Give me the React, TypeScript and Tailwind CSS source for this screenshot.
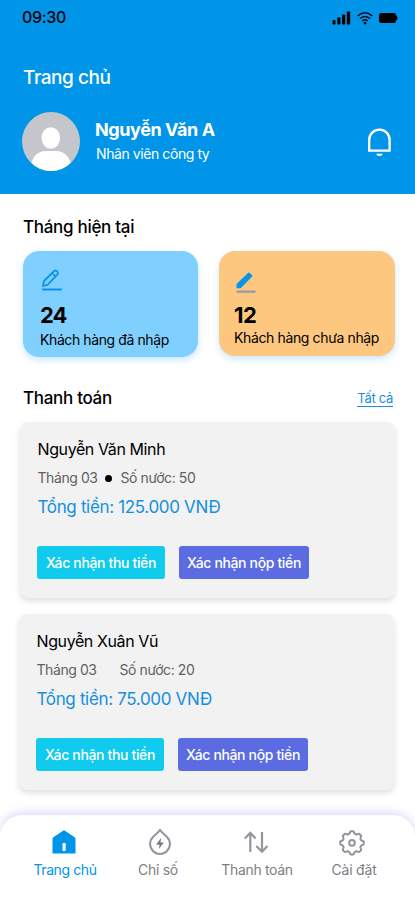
import React from "react";

function StatusBar() {
  return (
    <div className="flex h-[35px] items-center justify-between pl-[22px] pr-[17px] text-black">
      <span className="text-base font-medium leading-[35px] tracking-[-0.3px]">09:30</span>
      <div className="flex items-center gap-[6px]">
        <svg width="19" height="14" viewBox="0 0 19 14" fill="currentColor">
          <rect x="0.5" y="9" width="3" height="4.5" rx="0.8" />
          <rect x="5.3" y="6.5" width="3.2" height="7" rx="0.8" />
          <rect x="10" y="3.5" width="3.2" height="10" rx="0.8" />
          <rect x="14.8" y="0.5" width="3.4" height="13" rx="0.8" />
        </svg>
        <svg width="16" height="14" viewBox="0 0 16 14" fill="none" stroke="currentColor" strokeWidth="1.3">
          <path d="M0.7 5C4.8 .8 11.2 .8 15.3 5" />
          <path d="M3 7.6c2.8-2.7 7.2-2.7 10 0" />
          <path d="M5.3 10c1.6-1.5 3.8-1.5 5.4 0" />
          <circle cx="8" cy="12.1" r="1.4" fill="currentColor" stroke="none" />
        </svg>
        <svg width="19" height="12" viewBox="0 0 19 12" fill="currentColor">
          <rect x="0" y="1" width="17" height="10" rx="2.2" />
          <path d="M17 3.5c2 .6 2 4.4 0 5z" />
        </svg>
      </div>
    </div>
  );
}

function Header() {
  return (
    <header className="h-[194px] bg-[#0095e9] text-white">
      <StatusBar />
      <h1 className="mt-[31px] pl-[23px] text-[19px] font-medium leading-6 tracking-[-0.45px]">Trang chủ</h1>
      <div className="mt-[22px] flex items-center pl-[22px] pr-[23px]">
        <svg width="58" height="59" viewBox="0 0 58 59">
          <defs>
            <clipPath id="avatar">
              <ellipse cx="29" cy="29.5" rx="29" ry="29.5" />
            </clipPath>
          </defs>
          <g clipPath="url(#avatar)">
            <rect width="58" height="59" fill="#c5c6cc" />
            <ellipse cx="28.8" cy="26" rx="9.3" ry="10.8" fill="#fff" />
            <path d="M8 59C9 45 15 39 24 39h10c9 0 15 6 16 20z" fill="#fff" />
          </g>
        </svg>
        <div className="ml-[15px] flex-1">
          <div className="-mt-[2px] text-lg font-bold leading-6 tracking-[-0.42px]">Nguyễn Văn A</div>
          <div className="ml-px mt-[2px] text-sm leading-5 tracking-[-0.42px]">Nhân viên công ty</div>
        </div>
        <svg width="25" height="30" viewBox="0 0 25 30" fill="none" stroke="#fff" strokeWidth="2.3">
          <path d="M2.2 23.7V12.9a10.2 10.2 0 0 1 20.4 0v10.8z" />
          <path d="M9.3 26.8h6.4c-.6 3-5.8 3-6.4 0z" fill="#fff" stroke="none" />
        </svg>
      </div>
    </header>
  );
}

function SummaryCards() {
  return (
    <div className="mt-3 flex items-start justify-between pl-[23px] pr-5">
      <div className="h-[106px] w-[175px] rounded-2xl bg-[#80d0ff] pl-[17px] pt-[18px] shadow-[0_3px_7px_rgba(0,149,233,0.22)]">
        <svg width="22" height="22" viewBox="0 0 22 22" fill="none" stroke="#0a94e8" strokeWidth="1.8" strokeLinejoin="round">
          <path d="M3 17l1-5L14.2 2q1.3-1 2.6.2l.7.7q1 1.2 0 2.4L7.5 15.8z" />
          <path d="M13 4.8l2.8 2.8M2 20.5h20" />
        </svg>
        <div className="mt-[12px] text-[22px] font-bold leading-6 tracking-[-0.9px]">24</div>
        <div className="mt-[3px] whitespace-nowrap text-sm leading-5 tracking-[-0.4px]">Khách hàng đã nhập</div>
      </div>
      <div className="h-[105px] w-[176px] rounded-2xl bg-[#fdc77f] pl-[15px] pt-[20px] shadow-[0_3px_7px_rgba(0,149,233,0.22)]">
        <svg width="22" height="22" viewBox="0 0 22 22">
          <path d="M2.5 17.3v-4.2L14 2q.9-.8 1.8 0l2.2 2q.9.9 0 1.8L6.7 17.3z" fill="#0795eb" />
          <path d="M2.5 20.7h19" stroke="#999fa7" strokeWidth="2.4" />
        </svg>
        <div className="mt-[10px] text-[22px] font-bold leading-6 tracking-[-0.5px]">12</div>
        <div className="mt-px whitespace-nowrap text-sm leading-5 tracking-[-0.37px]">Khách hàng chưa nhập</div>
      </div>
    </div>
  );
}

type Payment = { name: string; water: string; total: string; dot: boolean };

function PaymentCard({ name, water, total, dot }: Payment) {
  return (
    <article className="h-[176px] rounded-lg bg-[#f2f2f2] pl-[17.5px] pt-[15px] shadow-[0_3px_6px_rgba(0,0,0,0.13)]">
      <div className="text-base leading-6 tracking-[-0.4px]">{name}</div>
      <div className="mt-[7px] flex items-center text-sm leading-5 tracking-[-0.42px] text-[#616161]">
        <span className="w-[67px]">Tháng 03</span>
        <span className={dot ? "size-[7px] rounded-full bg-black" : "size-[7px]"} />
        <span className="ml-[9px]">{water}</span>
      </div>
      <div className="mt-[7px] text-[17px] leading-6 tracking-[-0.34px] text-[#168fdd]">{total}</div>
      <div className="-ml-[0.5px] mt-[27px] flex gap-[14px] text-sm font-medium tracking-[-0.35px] text-white">
        <button className="h-[33px] w-[128px] whitespace-nowrap rounded-[3px] bg-[#10cbed]">Xác nhận thu tiền</button>
        <button className="h-[33px] w-[130px] whitespace-nowrap rounded-[3px] bg-[#5b6ce2]">Xác nhận nộp tiền</button>
      </div>
    </article>
  );
}

function BottomNav() {
  return (
    <nav className="mt-[25px] flex h-[85px] rounded-t-[22px] bg-white pt-[13px] text-sm text-[#808084] shadow-[0_-3px_8px_rgba(80,90,220,0.2)]">
      <div className="ml-[15px] flex w-[100px] flex-col items-center text-[#0095e9]">
        <svg width="26" height="28" viewBox="0 0 26 28" className="-ml-[2px]">
          <path d="M1.5 25.5V11q0-1 1-1.8l9.5-6.5q1-.8 2 0l9.5 6.5q1 .8 1 1.8v14.5z" fill="#0095e9" />
          <rect x="11.5" y="15" width="3.2" height="8" rx="0.8" fill="#fff" />
        </svg>
        <span className="mt-[4px] whitespace-nowrap leading-5 tracking-[-0.4px]">Trang chủ</span>
      </div>
      <div className="ml-[-4px] flex w-[94px] flex-col items-center">
        <svg width="26" height="28" viewBox="0 0 26 28" fill="none" stroke="#94949c" strokeWidth="2" strokeLinejoin="round" className="ml-[4px]">
          <path d="M13 1.8C11 4.6 8.5 6.6 6 9a9.9 9.9 0 1 0 14 0C17.5 6.6 15 4.6 13 1.8z" />
          <path d="M14.1 9.8L9.2 16.7h3.4L11.9 21l4.9-6.6h-3.3z" fill="#777783" stroke="none" />
        </svg>
        <span className="mt-[4px] whitespace-nowrap leading-5 tracking-[-0.3px]">Chỉ số</span>
      </div>
      <div className="ml-[2px] flex w-[100px] flex-col items-center">
        <svg width="26" height="28" viewBox="0 0 26 28" fill="none" stroke="#94949c" strokeWidth="2.2" className="-ml-[2px]">
          <path d="M7.3 24V5M1.8 10.5l5.5-5.7 5.3 5.7M19 4v19.5M13.3 18l5.7 5.7 5.5-5.7" />
        </svg>
        <span className="mt-[4px] whitespace-nowrap leading-5 tracking-[-0.35px]">Thanh toán</span>
      </div>
      <div className="ml-[2px] flex w-[90px] flex-col items-center">
        <svg width="26" height="28" viewBox="0 0 26 28" fill="none" stroke="#94949c" strokeWidth="2" strokeLinejoin="round" className="-ml-[5px]">
          <path d="M10.3 5.8l1.3-2.6h2.8l1.3 2.6 1.5.7 3-.8 2 2-.8 3 .6 1.5 2.7 1.3v2.8L22 17.6l-.6 1.5.8 3-2 2-3-.8-1.5.6-1.3 2.6h-2.8l-1.3-2.6-1.5-.6-3 .8-2-2 .8-3-.6-1.5-2.7-1.3v-2.8L4 12.2l.6-1.5-.8-3 2-2 3 .8z" />
          <circle cx="13" cy="14.9" r="2.8" />
        </svg>
        <span className="mt-[4px] whitespace-nowrap leading-5 tracking-[-0.2px]">Cài đặt</span>
      </div>
    </nav>
  );
}

export default function App() {
  return (
    <div className="h-[900px] w-[415px] overflow-hidden bg-white font-['Inter','Noto_Sans',sans-serif] text-black">
      <Header />
      <h2 className="mt-[21px] pl-[23px] text-[17px] font-medium leading-6 tracking-[-0.3px]">Tháng hiện tại</h2>
      <SummaryCards />
      <div className="mt-[29px] flex items-center justify-between pl-[23px] pr-[22px]">
        <h2 className="text-[17px] font-medium leading-6 tracking-[-0.3px]">Thanh toán</h2>
        <a className="mt-px border-b border-[#168fdd] text-[13px] leading-[15px] tracking-[-0.3px] text-[#168fdd]">Tất cả</a>
      </div>
      <div className="mt-3 pl-5 pr-[20px]">
        <PaymentCard name="Nguyễn Văn Minh" water="Số nước: 50" total="Tổng tiền: 125.000 VNĐ" dot />
      </div>
      <div className="mt-4 pl-[19px] pr-[21px]">
        <PaymentCard name="Nguyễn Xuân Vũ" water="Số nước: 20" total="Tổng tiền: 75.000 VNĐ" dot={false} />
      </div>
      <BottomNav />
    </div>
  );
}
